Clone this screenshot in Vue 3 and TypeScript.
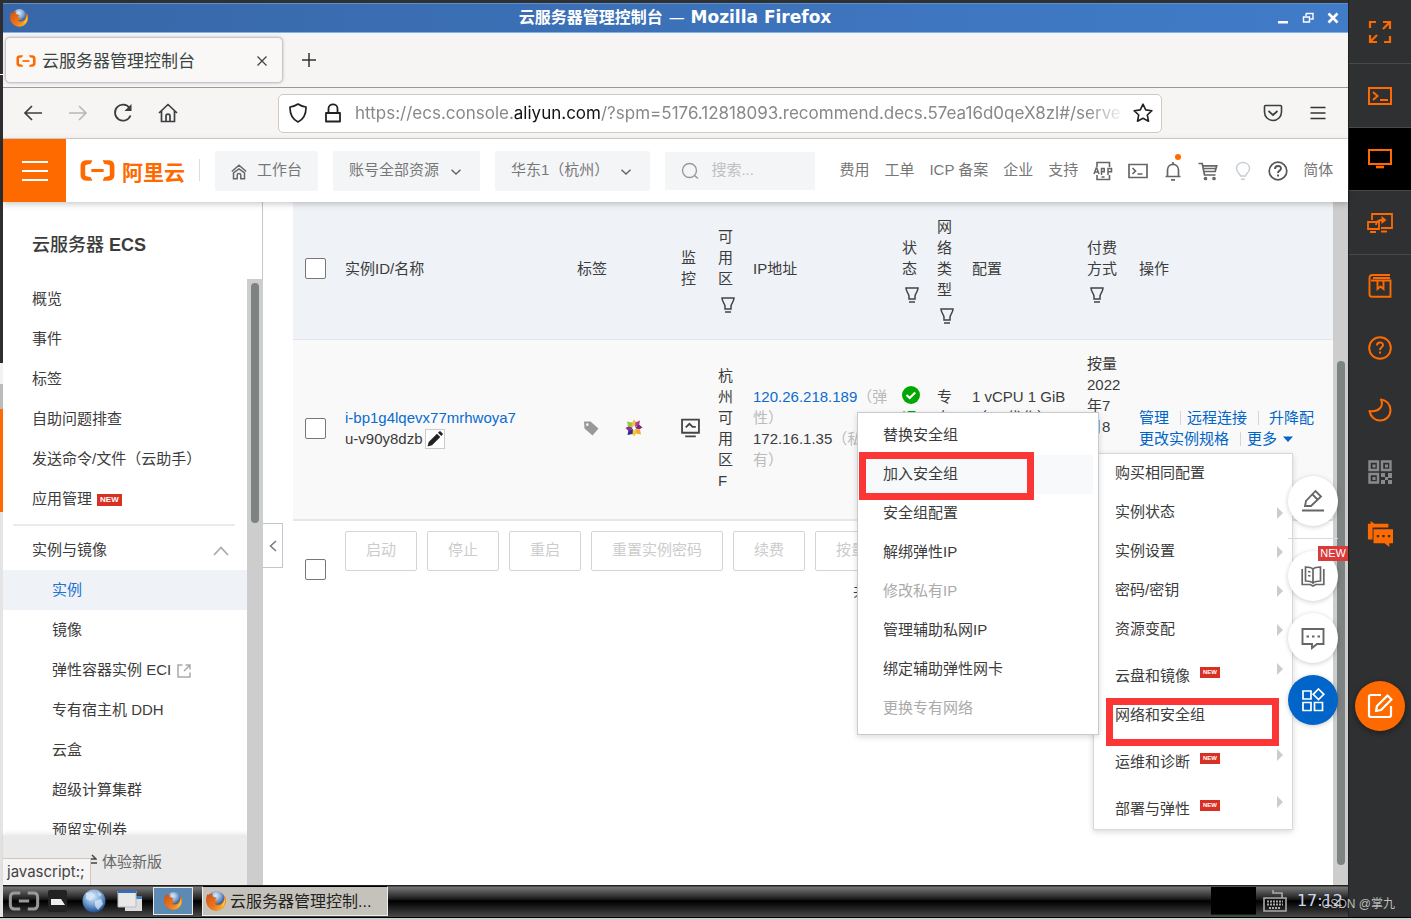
<script setup lang="ts">
import { ref } from 'vue'

interface NavItem { label: string; badge?: boolean; external?: boolean; active?: boolean }
interface MenuItem { label: string; arrow?: boolean; badge?: boolean; disabled?: boolean; hover?: boolean }

const pageTitle = '云服务器管理控制台'
const keyword = ref('')
const picked = ref({ all: false, row: false, batch: false })

const topItems: NavItem[] = [
  { label: '概览' },
  { label: '事件' },
  { label: '标签' },
  { label: '自助问题排查' },
  { label: '发送命令/文件（云助手）' },
  { label: '应用管理', badge: true },
]

const groupItems: NavItem[] = [
  { label: '实例', active: true },
  { label: '镜像' },
  { label: '弹性容器实例 ECI', external: true },
  { label: '专有宿主机 DDH' },
  { label: '云盒' },
  { label: '超级计算集群' },
  { label: '预留实例券' },
]

const headerLinks = ['费用', '工单', 'ICP 备案', '企业', '支持']

const columns = [
  { key: 'name', label: '实例ID/名称' },
  { key: 'tag', label: '标签' },
  { key: 'monitor', label: '监控' },
  { key: 'zone', label: '可用区', filter: true },
  { key: 'ip', label: 'IP地址' },
  { key: 'status', label: '状态', filter: true },
  { key: 'net', label: '网络类型', filter: true },
  { key: 'config', label: '配置' },
  { key: 'pay', label: '付费方式', filter: true },
  { key: 'ops', label: '操作' },
]

const batchActions = ['启动', '停止', '重启', '重置实例密码', '续费', '按量付费转包年包月']

const moreMenu: MenuItem[] = [
  { label: '购买相同配置' },
  { label: '实例状态', arrow: true },
  { label: '实例设置', arrow: true },
  { label: '密码/密钥', arrow: true },
  { label: '资源变配', arrow: true },
  { label: '云盘和镜像', arrow: true, badge: true },
  { label: '网络和安全组' },
  { label: '运维和诊断', arrow: true, badge: true },
  { label: '部署与弹性', arrow: true, badge: true },
]

const networkMenu: MenuItem[] = [
  { label: '替换安全组' },
  { label: '加入安全组', hover: true },
  { label: '安全组配置' },
  { label: '解绑弹性IP' },
  { label: '修改私有IP', disabled: true },
  { label: '管理辅助私网IP' },
  { label: '绑定辅助弹性网卡' },
  { label: '更换专有网络', disabled: true },
]
</script>

<template>
  <div class="screen">
    <svg class="defs" aria-hidden="true">
      <defs>
        <radialGradient id="globe" cx="45%" cy="30%" r="70%">
          <stop offset="0" stop-color="#dcecfa" />
          <stop offset="0.5" stop-color="#7fa9d8" />
          <stop offset="1" stop-color="#1c4a8c" />
        </radialGradient>
        <linearGradient id="flame" x1="0" y1="0" x2="1" y2="1">
          <stop offset="0" stop-color="#c9501a" />
          <stop offset="0.6" stop-color="#ee7a1c" />
          <stop offset="1" stop-color="#fbc830" />
        </linearGradient>
        <symbol id="firefox" viewBox="0 0 22 22">
          <circle cx="11" cy="11" r="9.5" fill="#b8431a" />
          <circle cx="11.5" cy="8.5" r="7.5" fill="url(#globe)" />
          <path d="M2.5 4c-2 4-2 9 .8 12.500 3.500 4.500 10.500 5.500 14.700 1.500 3.600-3.400 3.800-9 1.500-12.500.3 3-.6 5-2 7-2 2.700-6 3-8 1 2 .2 3.500-.8 3.800-2-1.300-.2-2.800-.3-3.300-1.500.5-1 1.500-1.500 1.300-2.300C9.800 7.200 8.500 7 7.500 6.200 7.300 5 7.600 4 8 3.200 6.200 3.700 5.300 4.500 4.500 5.500 3.500 5.300 2.800 5 2.500 4z" fill="url(#flame)" />
          <path d="M19 6.500c1 4-.5 8.500-4 10.800 4-.8 6-5.300 4-10.800z" fill="#ffe04a" />
        </symbol>
        <symbol id="brackets" viewBox="0 0 38 24">
          <path d="M14 2H8.500C4.500 2 2.500 4 2.500 8v8c0 4 2 6 6 6H14l-1.500-3.500-4-.8C7.300 17.400 7 17 7 16V8c0-1 .3-1.400 1.500-1.700l4-.8zM24 2h5.500c4 0 6 2 6 6v8c0 4-2 6-6 6H24l1.500-3.500 4-.8c1.200-.3 1.500-.7 1.500-1.700V8c0-1-.3-1.400-1.500-1.700l-4-.8z" fill="currentColor" />
          <path d="M13 10.500h12v3H13z" fill="currentColor" />
        </symbol>
      </defs>
    </svg>

    <div class="body">
      <div class="edge"></div>

      <div class="desktop">
        <header class="titlebar">
          <svg class="ff"><use href="#firefox" /></svg>
          <h1><span>{{ pageTitle }}</span> <i>—</i> <b>Mozilla Firefox</b></h1>
          <div class="window-buttons">
            <button aria-label="最小化"><svg viewBox="0 0 12 12"><path d="M1 9h10v2.500H1z" fill="#fff" /></svg></button>
            <button aria-label="还原"><svg viewBox="0 0 12 12"><path d="M4 1.500h7v5.500H8.500M4 1.500v2.500M1.500 5h6v5h-6z" fill="none" stroke="#fff" stroke-width="1.400" /></svg></button>
            <button aria-label="关闭"><svg viewBox="0 0 12 12"><path d="M1.500 1.500l9 9M10.500 1.500l-9 9" stroke="#fff" stroke-width="2.600" /></svg></button>
          </div>
        </header>

        <div class="tabstrip">
          <div class="tab">
            <svg class="favicon"><use href="#brackets" /></svg>
            <span>{{ pageTitle }}</span>
            <button aria-label="关闭标签页"><svg viewBox="0 0 12 12"><path d="M1.500 1.500l9 9M10.500 1.500l-9 9" stroke="#444" stroke-width="1.300" /></svg></button>
          </div>
          <button class="newtab" aria-label="新标签页"><svg viewBox="0 0 16 16"><path d="M8 1v14M1 8h14" stroke="#333" stroke-width="1.500" /></svg></button>
        </div>

        <div class="navbar">
          <div class="nav-buttons">
            <button aria-label="后退"><svg viewBox="0 0 20 20"><path d="M19 10H2M9 3L2 10l7 7" fill="none" stroke="#3a3f40" stroke-width="1.700" /></svg></button>
            <button aria-label="前进" disabled><svg viewBox="0 0 20 20"><path d="M1 10h17M11 3l7 7-7 7" fill="none" stroke="#b8b8b8" stroke-width="1.600" /></svg></button>
            <button aria-label="刷新"><svg viewBox="0 0 20 20"><path d="M17.500 12.500A8 8 0 1 1 16.500 5" fill="none" stroke="#3a3f40" stroke-width="1.800" /><path d="M18.500 1v7h-7z" fill="#3a3f40" /></svg></button>
            <button aria-label="主页"><svg viewBox="0 0 20 20"><path d="M1 10l9-8.500L19 10M3.500 8v10.500h13V8M8 18.500V13c0-2.500 4-2.500 4 0v5.500" fill="none" stroke="#3a3f40" stroke-width="1.700" stroke-linejoin="round" /></svg></button>
          </div>
          <div class="urlbar">
            <svg viewBox="0 0 20 20"><path d="M10 1c2.500 1.800 5 2.600 8 3 .2 7-2 12-8 15C4 16 1.800 11 2 4c3-.4 5.500-1.200 8-3z" fill="none" stroke="#222" stroke-width="1.700" stroke-linejoin="round" /></svg>
            <svg class="lock" viewBox="0 0 20 20"><path d="M3 10h14v8.500H3zM5.500 10V5.500C5.500 0 14.500 0 14.500 5.500V10" fill="none" stroke="#222" stroke-width="1.800" stroke-linejoin="round" /></svg>
            <p>https://ecs.console.<b>aliyun.com</b>/?spm=5176.12818093.recommend.decs.57ea16d0qeX8zl#/serve</p>
            <svg viewBox="0 0 20 20"><path d="M10 1.200l2.700 5.700 6.200.8-4.600 4.300 1.200 6.200L10 15.200l-5.500 3 1.200-6.200L1.100 7.700l6.200-.8z" fill="none" stroke="#222" stroke-width="1.600" stroke-linejoin="round" /></svg>
          </div>
          <div class="nav-right">
            <button aria-label="Pocket"><svg viewBox="0 0 20 20"><path d="M2.500 2.500h15c.6 0 1 .4 1 1V9a8.500 8.500 0 0 1-17 0V3.500c0-.6.4-1 1-1z" fill="none" stroke="#3a3f40" stroke-width="1.600" /><path d="M5.500 8l4.500 4L14.500 8" fill="none" stroke="#3a3f40" stroke-width="1.700" /></svg></button>
            <button aria-label="菜单"><svg viewBox="0 0 20 20"><path d="M2.500 4.500h15M2.500 10h15M2.500 15.500h15" stroke="#333" stroke-width="1.500" /></svg></button>
          </div>
        </div>

        <div class="console-head">
          <button class="burger" aria-label="产品菜单"><svg viewBox="0 0 26 22"><path d="M0 2h26M0 11h26M0 20h26" stroke="#fff" stroke-width="2.200" /></svg></button>
          <a class="logo" href="#"><svg><use href="#brackets" /></svg><span>阿里云</span></a>
          <button class="chip home">
            <svg viewBox="0 0 16 16"><path d="M.8 7.500L8 1.300l7.200 6.200M2.500 9v5.700h3.700V11c0-2 3.600-2 3.600 0v3.700h3.700V9L8 5z" fill="none" stroke="#666" stroke-width="1.500" /></svg>工作台
          </button>
          <button class="chip">账号全部资源<svg class="chev" viewBox="0 0 10 6"><path d="M.5.7L5 5 9.500.7" fill="none" stroke="#666" stroke-width="1.500" /></svg></button>
          <button class="chip">华东1（杭州）<svg class="chev" viewBox="0 0 10 6"><path d="M.5.7L5 5 9.500.7" fill="none" stroke="#666" stroke-width="1.500" /></svg></button>
          <label class="search">
            <svg viewBox="0 0 18 18"><circle cx="8.500" cy="8.500" r="7" fill="none" stroke="#999" stroke-width="1.400" /><path d="M13.500 13.500L17 16.500" stroke="#999" stroke-width="1.500" /></svg>
            <input v-model="keyword" type="text" placeholder="搜索..." aria-label="搜索" />
          </label>
          <nav class="links">
            <a v-for="l in headerLinks" :key="l" href="#">{{ l }}</a>
          </nav>
          <div class="tools">
            <button aria-label="App"><svg viewBox="0 0 20 20" fill="none" stroke="#666" stroke-width="1.600"><path d="M4 6V1.500h12.500V6M4 14v4.500h12.500V14M8.500 16h3" /><path d="M1 13l2.200-6h.6L6 13M2 11h3M8.500 14V7.500h2.700v3.200H8.500M15 14V7.500h3.500v3.200H15" stroke-width="1.500" /></svg></button>
            <button aria-label="终端"><svg viewBox="0 0 20 20" fill="none" stroke="#666" stroke-width="1.700"><path d="M1 3.500h18v13H1zM4.500 7l3 3-3 3M9.500 13h5" /></svg></button>
            <button class="bell" aria-label="消息"><svg viewBox="0 0 20 20" fill="none" stroke="#666" stroke-width="1.700"><path d="M2.500 15.500h15M4.500 15.500V9c0-7.500 11-7.500 11 0v6.500M10 1v2.500M8 18.800h4" /></svg></button>
            <button aria-label="购物车"><svg viewBox="0 0 20 20" fill="none" stroke="#666" stroke-width="1.700"><path d="M.5 2.500h3.700L6.500 14h11M4.700 4.800h14l-1.500 5.700H5.800M5 7.500h13" /><circle cx="7.500" cy="17.500" r="1" /><circle cx="16" cy="17.500" r="1" /></svg></button>
            <button aria-label="提示"><svg viewBox="0 0 20 20" fill="none" stroke="#c8ccd4" stroke-width="1.400"><path d="M7.500 15c0-2-4-3.500-4-7.500 0-8 13-8 13 0 0 4-4 5.500-4 7.500zM8 18.300h4" /></svg></button>
            <button aria-label="帮助"><svg viewBox="0 0 20 20" fill="none" stroke="#555" stroke-width="1.700"><circle cx="10" cy="10" r="8.800" /><path d="M7 8c0-4 6-4 6-.5 0 2.300-3 2-3 4.500M10 13.500v2" stroke-width="1.900" /></svg></button>
          </div>
          <a class="lang" href="#">简体</a>
        </div>

        <div class="workspace">
          <aside class="side">
            <h2>云服务器 <b>ECS</b></h2>
            <div class="side-scroll">
              <div class="side-list">
                <a v-for="i in topItems" :key="i.label" class="side-item" href="#">{{ i.label }}<em v-if="i.badge" class="new">NEW</em></a>
                <hr />
                <button class="side-group">实例与镜像<svg viewBox="0 0 16 10"><path d="M1 9l7-7.500L15 9" fill="none" stroke="#aaa" stroke-width="1.800" /></svg></button>
                <a v-for="i in groupItems" :key="i.label" class="side-item sub" :class="{ active: i.active }" href="#">{{ i.label }}<svg v-if="i.external" viewBox="0 0 14 14"><path d="M5.500 1H1v12h12V8.500M8.500 1H13v4.500M13 1L7 7" fill="none" stroke="#aaa" stroke-width="1.500" /></svg></a>
              </div>
              <div class="track"><div class="thumb"></div></div>
            </div>
            <a class="trial" href="#"><svg viewBox="0 0 14 14"><path d="M0 5h13L9 1M14 9H1l4 4" fill="none" stroke="#444" stroke-width="1.500" /></svg>体验新版</a>
            <span class="status-tip">javascript:;</span>
            <button class="collapse" aria-label="收起"><svg viewBox="0 0 8 12"><path d="M7 1L1.500 6 7 11" fill="none" stroke="#70798a" stroke-width="1.500" /></svg></button>
          </aside>

          <main>
            <table>
              <colgroup>
                <col class="c-check" />
                <col v-for="c in columns" :key="c.key" :class="'c-' + c.key" />
              </colgroup>
              <thead>
                <tr>
                  <th><input v-model="picked.all" type="checkbox" aria-label="全选" /></th>
                  <th v-for="c in columns" :key="c.key">
                    {{ c.label }}
                    <span v-if="c.filter" class="filter"><svg viewBox="0 0 14 16"><path d="M1 1h12c0 4-3 5.500-3 8.500v2.500H4V9.500C4 6.500 1 5 1 1zM4 15h6" fill="none" stroke="#444" stroke-width="1.500" /></svg></span>
                  </th>
                </tr>
              </thead>
              <tbody>
                <tr>
                  <td><input v-model="picked.row" type="checkbox" aria-label="选择实例" /></td>
                  <td>
                    <a href="#">i-bp1g4lqevx77mrhwoya7</a><br />
                    <span class="host">u-v90y8dzb<button class="edit" aria-label="编辑名称"><svg viewBox="0 0 18 18"><path d="M1.500 16.500l1.200-4.500L11 3.700l3.300 3.300L6 15.300zM12 2.700l1.200-1.200c.5-.5 1-.5 1.500 0l1.800 1.800c.5.500.5 1 0 1.500L15.300 6z" fill="#222" /></svg></button></span>
                  </td>
                  <td>
                    <span class="tags">
                      <svg class="label-icon" viewBox="0 0 16 16"><path d="M1 1.500h6.500l8 7-6 7-8-7zM4.300 3.300a1.300 1.300 0 1 0 .1 2.600 1.300 1.300 0 0 0-.1-2.600z" fill="#999" fill-rule="evenodd" /></svg>
                      <svg class="flower" viewBox="0 0 18 18">
                        <path d="M9 8L6.500 4.500 9 .5l2.500 3z" fill="#f5c04a" /><path d="M10 8l.5-4.500 4.500-2-1 5z" fill="#a8408c" /><path d="M10 9l4-3.500 3.500 3-3.500 2z" fill="#7a2a86" /><path d="M10 10l5 .5 1 5-5-1z" fill="#f3a92c" /><path d="M9 10l2.500 4L9 17.500 6.500 14z" fill="#f5c542" /><path d="M8 10l-.5 5-5 1 1-5z" fill="#2b2f86" /><path d="M8 9l-4 3.500L.5 9 4 7z" fill="#8c2f91" /><path d="M8 8l-5-.5-1-5 5 1z" fill="#9dc83c" /><circle cx="9" cy="9" r="1.500" fill="#fff" />
                      </svg>
                    </span>
                  </td>
                  <td><svg class="monitor" viewBox="0 0 18 18"><path d="M1 1h16v12.500H1zM4 17h10M4.500 8.500L8 5l3 3h3" fill="none" stroke="#444" stroke-width="1.700" /></svg></td>
                  <td>杭州可用区F</td>
                  <td><a href="#">120.26.218.189</a><small>（弹<br />性）</small><br />172.16.1.35<small>（私<br />有）</small></td>
                  <td class="running"><svg viewBox="0 0 18 18"><circle cx="9" cy="9" r="9" fill="#00a700" /><path d="M4.500 9l3.200 3 5.500-5.500" fill="none" stroke="#fff" stroke-width="2.200" /></svg>运行中</td>
                  <td>专有网络</td>
                  <td>1 vCPU 1 GiB<br />（I/O优化）<br />5Mbps<br />（峰值）</td>
                  <td class="pay">按量<br />2022<br />年7<br />月8</td>
                  <td class="ops">
                    <a href="#">管理</a><i></i><a href="#">远程连接</a><i></i><a class="last" href="#">升降配</a><br />
                    <a href="#">更改实例规格</a><i></i><a href="#">更多<svg viewBox="0 0 10 6"><path d="M0 .5h10L5 6z" fill="#0064c8" /></svg></a>
                  </td>
                </tr>
              </tbody>
            </table>
            <div class="batch">
              <input v-model="picked.batch" type="checkbox" aria-label="批量选择" />
              <div class="batch-right">
                <div class="batch-actions">
                  <button v-for="a in batchActions" :key="a" disabled>{{ a }}</button>
                </div>
                <p>共有1条</p>
              </div>
            </div>
          </main>

          <div class="track page-track"><div class="thumb"></div></div>

          <ul class="menu more-menu">
            <li v-for="m in moreMenu" :key="m.label" :class="{ tall: m.badge }">
              <button>{{ m.label }}<em v-if="m.badge" class="new tiny">NEW</em></button>
              <svg v-if="m.arrow" viewBox="0 0 6 12"><path d="M0 0l6 6-6 6z" fill="#ccc" /></svg>
            </li>
            <li class="mark" aria-hidden="true"></li>
          </ul>

          <ul class="menu net-menu">
            <li v-for="m in networkMenu" :key="m.label" :class="{ hover: m.hover }">
              <button :disabled="m.disabled">{{ m.label }}</button>
            </li>
            <li class="mark" aria-hidden="true"></li>
          </ul>

          <div class="floats">
            <button aria-label="反馈"><svg viewBox="0 0 24 24" fill="none" stroke="#666" stroke-width="1.800"><path d="M1 21.500h22M4 17l1-5L14.500 2l5.500 5.500L10 17zM11.500 5.500l5 5" /></svg></button>
            <hr />
            <button aria-label="文档"><svg viewBox="0 0 24 24" fill="none" stroke="#666" stroke-width="1.700"><path d="M12 5c-2-1.800-4-2-7.500-2v14c3.500 0 5.500.2 7.500 2 2-1.800 4-2 7.500-2V3c-3.500 0-5.500.2-7.500 2zM12 5v14M1.200 5v15.500h8L12 22l2.800-1.500h8V5M7 7.500l2.500.5M7 11.500l2.500.5" /></svg><em>NEW</em></button>
            <button aria-label="咨询"><svg viewBox="0 0 24 24" fill="none" stroke="#666" stroke-width="1.900"><path d="M11 22v-4H1.500V3h21v15H16z" /><path d="M5.500 10.500h2.500M11 10.500h2.500M16.500 10.500H19" stroke-width="2.200" /></svg></button>
            <button class="blue" aria-label="工具"><svg viewBox="0 0 24 24" fill="none" stroke="#fff" stroke-width="1.700"><path d="M2 3h8v8H2zM2 14.500h8v8H2zM13.500 14.500h8v8h-8zM17.500 1l5.300 5.300-5.300 5.300-5.300-5.300z" /></svg></button>
          </div>
        </div>

        <footer class="taskbar">
          <button class="start" aria-label="开始"><svg viewBox="0 0 34 22"><path d="M13 2.500H7Q2.500 2.500 2.500 7v8q0 4.500 4.500 4.500h6M21 2.500h6q4.500 0 4.500 4.500v8q0 4.500-4.500 4.500h-6M11.500 11h11" fill="none" stroke="#999" stroke-width="3.200" /></svg></button>
          <svg class="launch" viewBox="0 0 26 26"><rect x="3" y="2" width="19" height="22" rx="2" fill="#222" /><path d="M6 11h10l4 6H6z" fill="#eee" /></svg>
          <svg class="launch" viewBox="0 0 26 26"><circle cx="13" cy="13" r="11.500" fill="url(#globe)" /><path d="M5 5l6-1 2 4-3 5-5-2zM14 13l6-2 2 5-5 6-3-4zM16 3l5 4-3 1z" fill="#dbe9f7" opacity=".75" /></svg>
          <svg class="launch" viewBox="0 0 26 26"><path d="M8 8h17v15H8z" fill="#ddd" /><path d="M8 8h17v3H8z" fill="#4a7cc0" /><path d="M1 3h18v16H1z" fill="#e8e8e6" stroke="#bbb" /><path d="M1 2h18v3H1z" fill="#3a6cb4" /></svg>
          <button class="quick" aria-label="Firefox"><svg><use href="#firefox" /></svg></button>
          <button class="task"><svg><use href="#firefox" /></svg><span>云服务器管理控制...</span></button>
          <div class="cpu"></div>
          <svg class="keyboard" viewBox="0 0 24 24" fill="none" stroke="#aaa" stroke-width="1.600"><path d="M1 9h22v13H1zM10 1v3h9v5" /><path d="M4 12.500h16M4 15.500h16M6 19h11" stroke-dasharray="2 1" stroke-width="2" /></svg>
          <time>17:12</time>
        </footer>
      </div>

      <aside class="rail">
        <button aria-label="全屏"><svg viewBox="0 0 24 24" fill="none" stroke="#ff6a00" stroke-width="2.200"><path d="M2 8V2h6M15 2h7v7M22 2l-7 7M2 15v7h7M2 22l7-7M22 16v6h-6" /></svg></button>
        <button aria-label="终端"><svg viewBox="0 0 24 24" fill="none" stroke="#ff6a00" stroke-width="2"><path d="M1 4h22v16H1zM5 8l4.500 4L5 16M12 16h8" /></svg></button>
        <button class="on" aria-label="桌面"><svg viewBox="0 0 24 24" fill="none" stroke="#ff6a00" stroke-width="2"><path d="M1 3h22v14H1z" /><path d="M8 20h8" stroke-width="2.600" /></svg></button>
        <button aria-label="切换"><svg class="wide" viewBox="0 0 28 24" fill="none" stroke="#ff6a00" stroke-width="1.800"><path d="M6 9V3h20v14H15M2 11h11v7H2zM4 21h6M15 20.500h6M10 14c0-4 3-5 7-5" /><path d="M15.500 5l5 4-5 4z" fill="#ff6a00" stroke="none" /></svg></button>
        <button aria-label="手册"><svg viewBox="0 0 24 24" fill="none" stroke="#ff6a00" stroke-width="1.900"><path d="M22.500 5.500v17.300H4c-2 0-2.500-1-2.500-2.500V4c0-2 1-3 3-3H22M5 4h17M3 6.500h19.500M9.500 7v8l3-2.500 3 2.500V7" /></svg></button>
        <button aria-label="帮助"><svg viewBox="0 0 24 24" fill="none" stroke="#ff6a00" stroke-width="2"><circle cx="12" cy="12" r="10.800" /><path d="M9 9.500c0-4 6-4 6-.5 0 2.300-3 2.300-3 5M12 15.500v2" /></svg></button>
        <button aria-label="夜间"><svg viewBox="0 0 24 24" fill="none" stroke="#ff6a00" stroke-width="2"><path d="M13 1.500C16 8 11 14.500 1.500 13 2.500 19 7 22.500 12 22.500c6 0 10.500-4.500 10.500-10.500C22.500 6.500 18.500 2 13 1.500z" stroke-linejoin="round" /></svg></button>
        <button aria-label="二维码"><svg viewBox="0 0 24 24"><path d="M1.500 1.500h8.500v8.500H1.500zM14 1.500h8.500v8.500H14zM1.500 14h8.500v8.500H1.500z" fill="none" stroke="#8a8a8a" stroke-width="2.400" /><path d="M4.500 4.500h3v3h-3zM17 4.500h3v3h-3zM4.500 17h3v3h-3zM13 13h4v4h-4zM20 13h4v5h-4zM17 17h3v3h-3zM13 20h4v4h-4zM20 20h4v4h-4z" fill="#8a8a8a" /></svg></button>
        <button aria-label="聊天"><svg class="wide" viewBox="0 0 28 28"><path d="M1 3h3V0l4 3h15v4H6v13H1z" fill="#ff6a00" /><path d="M7 9h21v15h-4v4l-5-4H7z" fill="#ff6a00" /><path d="M10.500 15h2.500v2.500h-2.500zM16.500 15H19v2.500h-2.500zM22.500 15H25v2.500h-2.500z" fill="#2f3032" /></svg></button>
        <button class="round" aria-label="笔记"><svg viewBox="0 0 26 26" fill="none" stroke="#fff" stroke-width="2.200"><path d="M14 2H4Q2 2 2 4v18q0 2 2 2h18q2 0 2-2V13" /><path d="M9 18l1-5L20.500 2.500l4 4L14 17z" stroke-linejoin="round" /></svg></button>
      </aside>
    </div>

    <div class="bottom-edge"></div>
    <span class="watermark">CSDN @掌九</span>
  </div>
</template>

<style>
body { background: #2f3032; }
</style>

<style scoped>
* { box-sizing: border-box; }
.screen { position: relative; height: 100vh; min-height: 600px; display: flex; flex-direction: column; overflow: hidden; background: #2f3032; color: #3c3c3c; font: 15px/21px "Liberation Sans", "Noto Sans CJK SC", sans-serif; }
.defs { position: absolute; width: 0; height: 0; }
button { margin: 0; padding: 0; border: 0; background: none; color: inherit; font: inherit; white-space: nowrap; }
a { color: inherit; text-decoration: none; white-space: nowrap; }
svg { display: block; flex: none; }
ul { list-style: none; margin: 0; padding: 0; }
h1, h2, p { margin: 0; }
em, i { font-style: normal; }

.body { flex: 1; min-height: 0; display: flex; }
.edge { width: 3px; background: linear-gradient(#2e2e30 74px, #fff 74px, #fff 75px, #2e2e30 75px, #2e2e30 363px, #f2f2f2 363px, #f2f2f2 384px, #bbb 384px, #bbb 409px, #ff6a00 409px, #ff6a00 512px, #e4e4e4 512px); }
.desktop { flex: 1; min-width: 0; display: flex; flex-direction: column; padding-top: 3px; }

.titlebar { height: 30px; display: flex; align-items: center; padding: 0 9px 0 6px; background: linear-gradient(100deg, #3767a8, #417cc9); border-top: 1px solid #5a8fce; border-bottom: 1px solid #7fb2e8; color: #fff; }
.titlebar .ff { width: 20px; height: 20px; }
.titlebar h1 { flex: 1; text-align: center; font: bold 17px/26px "DejaVu Sans", "Noto Sans CJK SC", sans-serif; padding: 0 0 2px 44px; }
.titlebar h1 span { font-size: 16px; }
.titlebar h1 i { font-weight: normal; font-size: 16px; }
.window-buttons { display: flex; gap: 13px; }
.window-buttons svg { width: 12px; height: 12px; }

.tabstrip { height: 55px; display: flex; align-items: center; padding: 0 2px; background: #f6f5f4; border-bottom: 1px solid #999; }
.tab { width: 278px; height: 46px; display: flex; align-items: center; padding: 2px 14px 0 9px; border: 1px solid #c6c6d0; border-radius: 5px; box-shadow: 0 0 3px #bbb; background: #f9f8f7; color: #3c4444; }
.favicon { width: 22px; height: 16px; margin-right: 5px; color: #ff6a00; }
.tab span { flex: 1; font-size: 17px; }
.tab button svg { width: 12px; height: 12px; }
.newtab { margin-left: 18px; }
.newtab svg { width: 16px; height: 16px; }

.navbar { height: 51px; display: grid; grid-template-columns: 275px 1fr 186px; align-items: center; background: #f6f5f4; border-bottom: 1px solid #d5d3d0; }
.nav-buttons { display: flex; gap: 25px; padding-left: 20px; }
.navbar svg { width: 20px; height: 20px; }
.urlbar { min-width: 0; height: 39px; display: flex; align-items: center; gap: 15px; padding: 0 8px 0 9px; background: #fff; border: 1px solid #cfcac4; border-radius: 5px; }
.urlbar p { flex: 1; min-width: 0; overflow: hidden; white-space: nowrap; margin: 0 -7px 0 -3px; font: 17px/24px Inter, sans-serif; color: #888; mask-image: linear-gradient(90deg, #000 95%, transparent); }
.urlbar b { font-weight: 400; color: #111; }
.nav-right { display: flex; justify-content: flex-end; gap: 25px; padding-right: 20px; }

.console-head { position: relative; z-index: 2; height: 63px; display: flex; align-items: center; background: #fff; box-shadow: 0 2px 6px rgba(0, 0, 0, .22); color: #777; }
.burger { width: 63px; height: 63px; background: #ff6a00; }
.burger svg { width: 26px; height: 22px; margin: 0 auto; }
.logo { display: flex; align-items: center; gap: 5px; margin-left: 12px; padding-right: 15px; margin-right: 15px; color: #ff6a00; font: bold 21px/24px "Noto Sans CJK SC", sans-serif; position: relative; }
.logo svg { width: 39px; height: 25px; }
.logo::after { content: ""; position: absolute; right: 0; top: 1px; height: 22px; width: 1px; background: #ddd; }
.chip { height: 40px; display: flex; align-items: center; padding: 0 16px 2px; margin-right: 15px; background: #f4f5f7; border-radius: 2px; }
.chip.home { gap: 10px; }
.chip.home svg { width: 16px; height: 16px; margin-top: 4px; }
.chev { width: 10px; height: 6px; margin: 5px 3px 0 12px; }
.search { width: 150px; height: 38px; display: flex; align-items: center; gap: 12px; padding-left: 16px; background: #f4f5f7; }
.search svg { width: 18px; height: 18px; }
.search input { width: 90px; border: 0; padding: 0 0 2px; background: none; font: inherit; outline: 0; }
.search input::placeholder { color: #c0c0c0; }
.links { display: flex; gap: 15px; margin-left: 24px; padding-bottom: 2px; }
.tools { display: flex; gap: 15px; margin-left: 15px; }
.tools svg { width: 20px; height: 20px; }
.bell { position: relative; }
.bell::after { content: ""; position: absolute; width: 6px; height: 6px; border-radius: 50%; right: 2px; top: -7px; background: #ff6a00; }
.lang { margin-left: 15px; padding-bottom: 2px; }

.workspace { position: relative; flex: 1; min-height: 0; display: flex; background: #fff; }
.side { position: relative; width: 260px; display: flex; flex-direction: column; border-right: 1px solid #c0c6cc; }
.side h2 { padding: 30px 29px 21px; font-size: 18px; line-height: 26px; font-weight: 500; }
.side-scroll { flex: 1; min-height: 0; display: flex; margin-right: -1px; }
.side-list { flex: 1; min-width: 0; overflow: hidden; }
.side-item { height: 40px; display: flex; align-items: center; padding: 0 29px 2px; }
.side-item.sub { padding-left: 49px; }
.side-item svg { width: 14px; height: 14px; margin: 3px 0 0 6px; }
.active { background: #eff2f7; color: #1b73d2; }
.new { margin: 3px 0 0 5px; padding: 0 3px; height: 12px; font: bold 8px/12px "Liberation Sans", sans-serif; background: #d93026; color: #fff; }
.side hr { margin: 5px 12px 4px 10px; border: 0; height: 2px; background: #ebebeb; }
.side-group { width: 100%; height: 40px; display: flex; align-items: center; justify-content: space-between; padding: 0 18px 2px 29px; }
.side-group svg { width: 16px; height: 10px; margin-top: 4px; }
.track { width: 16px; padding: 4px; background: #cdcdcd; }
.thumb { width: 8px; height: 240px; border-radius: 4px; background: #7d8282; }
.trial { height: 50px; width: 244px; display: flex; align-items: center; gap: 5px; padding: 2px 0 0 80px; background: #eaeaea; color: #666; box-shadow: 0 -2px 4px rgba(0, 0, 0, .08); position: relative; }
.trial svg { width: 14px; height: 14px; }
.side::after { content: ""; position: absolute; right: -1px; bottom: 0; width: 16px; height: 50px; background: #cdcdcd; }
.status-tip { position: absolute; left: 0; bottom: 0; height: 27px; padding: 0 5px 0 4px; background: #f6f5f4; border: 1px solid #cfc8c2; border-width: 1px 1px 0 0; font: 15px/26px Inter, sans-serif; color: #444; }
.collapse { position: absolute; left: 260px; top: 321px; width: 20px; height: 45px; background: #fff; border: 1px solid #c0c6cc; border-left: 0; }
.collapse svg { width: 8px; height: 12px; margin: 0 auto; }

main { flex: 1; min-width: 0; padding-left: 30px; overflow: hidden; }
table { width: 100%; table-layout: fixed; border-collapse: collapse; }
.c-check { width: 40px; } .c-name { width: 232px; } .c-tag { width: 104px; } .c-monitor { width: 37px; }
.c-zone { width: 35px; } .c-ip { width: 149px; } .c-status { width: 35px; } .c-net { width: 35px; }
.c-config { width: 115px; } .c-pay { width: 52px; }
th, td { padding: 0 2px 2px 12px; text-align: left; vertical-align: middle; font-weight: 400; }
th { height: 137px; padding-bottom: 4px; background: #eff2f7; border-bottom: 1px solid #e3e6ea; }
td { height: 181px; background: #f9f9f9; border-bottom: 2px solid #e5e7ea; }
input[type="checkbox"] { appearance: none; display: block; width: 21px; height: 21px; margin: 0; border: 1px solid #777; border-radius: 2px; background: #fff; }
.filter { display: block; height: 21px; padding: 8px 0 0 3px; }
.filter svg { width: 14px; height: 16px; }
td a { color: #0a6cd0; }
td small { font-size: 15px; color: #bbb; }
.host { display: flex; align-items: center; height: 21px; }
.edit { width: 20px; height: 20px; margin-left: 2px; border: 1px solid #c8ccd0; background: #fff; }
.edit svg { width: 18px; height: 18px; }
.tags { display: flex; gap: 26px; padding-left: 6px; align-items: center; }
.label-icon { width: 16px; height: 16px; }
.flower { width: 18px; height: 18px; }
.monitor { width: 19px; height: 20px; }
.running { color: #00a700; }
.running svg { width: 18px; height: 18px; margin-bottom: 3px; }
td.pay { vertical-align: top; padding-top: 13px; }
.ops a { color: #0064c8; display: inline-block; }
.ops i { display: inline-block; width: 1px; height: 14px; margin: 0 6px 0 11px; background: #d5d5d5; vertical-align: -2px; }
.ops .last { margin-left: 4px; }
.ops svg { display: inline-block; width: 10px; height: 6px; margin-left: 6px; vertical-align: 2px; }
.batch { display: flex; align-items: center; gap: 19px; padding: 10px 0 0 12px; }
.batch input { flex: none; }
.batch-actions { display: flex; gap: 10px; }
.batch-actions button { height: 40px; padding: 0 20px 4px; border: 1px solid #d2d5da; border-radius: 2px; color: #ccc; }
.batch-right p { padding: 9px 0 7px 508px; }

.page-track { width: 15px; padding: 159px 3px 0 4px; }
.page-track .thumb { height: 504px; }

.menu { position: absolute; background: #fff; border: 1px solid #c5cbd1; box-shadow: 0 2px 6px rgba(0, 0, 0, .15); }
.menu li { height: 39px; display: flex; align-items: center; justify-content: space-between; }
.menu button { display: flex; padding-bottom: 2px; }
.menu button:disabled { color: #aaa; }
.more-menu { top: 251px; right: 55px; width: 200px; height: 377px; padding: 0 9px 0 21px; border-color: #d8d8d8; }
.more-menu svg { width: 6px; height: 12px; }
.more-menu .tall { height: 47px; align-items: flex-start; padding-top: 14px; }
.more-menu .tall button { padding-top: 2px; }
.tiny { margin: 2px 0 0 10px; height: 11px; font-size: 6px; line-height: 11px; }
.net-menu { top: 210px; right: 249px; width: 242px; padding: 3px 5px 6px 0; }
.net-menu li { padding-left: 25px; }
.net-menu .hover { background: #f7f9fb; }
.menu .mark { position: absolute; height: 48px; border: 7px solid #fc3535; }
.net-menu .mark { left: 1px; top: 39px; width: 175px; }
.more-menu .mark { left: 12px; top: 244px; width: 173px; }

.floats { position: absolute; right: 10px; top: 274px; width: 50px; display: flex; flex-direction: column; gap: 12px; }
.floats button { position: relative; height: 50px; border-radius: 50%; background: #fff; box-shadow: 0 1px 5px rgba(0, 0, 0, .2); }
.floats button svg { width: 24px; height: 24px; margin: 0 auto; }
.floats hr { width: 100%; height: 1px; margin: 0; border: 0; background: #d5dade; }
.floats em { position: absolute; right: -10px; top: -5px; padding: 0 2px; background: #d93a3a; color: #fff; font: 11px/15px "Liberation Sans", sans-serif; }
.floats .blue { background: #0064c8; }

.taskbar { height: 32px; display: flex; align-items: center; padding: 0 5px; background: linear-gradient(#222 1px, #777 2px, #4a4a4a 8px, #1c1c1c 14px, #000 16px, #111 20px, #4a4a4a); }
.start { margin-right: 5px; }
.start svg { width: 32px; height: 22px; }
.launch { width: 26px; height: 26px; margin-right: 10px; }
.quick { width: 40px; height: 28px; border: 1px solid #e8e8e8; background: #5d8ab3; }
.quick svg { width: 20px; height: 20px; margin: 0 auto; }
.task { width: 186px; height: 30px; margin-left: 9px; padding: 0 2px; display: flex; align-items: center; gap: 3px; background: #c5c2bb; border: 1px solid #eee; border-top-color: #000; color: #222; font-size: 16px; }
.task svg { width: 22px; height: 22px; }
.cpu { width: 45px; height: 28px; margin-left: auto; background: #000; border-bottom: 1px solid #082808; }
.keyboard { width: 24px; height: 24px; margin: 0 10px 0 7px; }
time { color: #cdd6ee; font: 16px/24px "DejaVu Sans", sans-serif; }

.rail { width: 63px; display: flex; flex-direction: column; background: #2f3032; border-left: 1px solid #222; }
.rail button { height: 62px; flex: none; }
.rail button:nth-child(-n+4) { height: 64px; border-bottom: 1px solid #48494b; }
.rail button.on { height: 63px; background: #000; }
.rail svg { width: 24px; height: 24px; margin: 0 auto; }
.rail svg.wide { width: 28px; height: 26px; }
.rail .round { width: 50px; height: 50px; margin: 116px auto 0; border-radius: 50%; background: #ff6a00; box-shadow: 0 2px 6px rgba(0, 0, 0, .4); }
.rail .round svg { width: 26px; height: 26px; }
.bottom-edge { height: 3px; border-top: 1px solid #000; background: #d0d0d0; }
.watermark { position: absolute; right: 16px; bottom: 6px; font-size: 12px; line-height: 20px; color: #bdbdbd; }
</style>
